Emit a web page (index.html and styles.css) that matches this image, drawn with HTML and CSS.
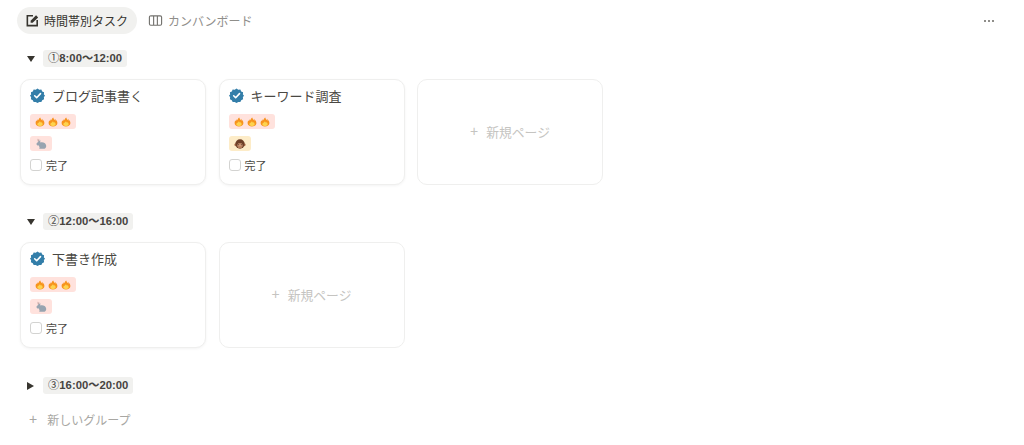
FILE: index.html
```html
<!DOCTYPE html>
<html lang="ja">
<head>
    <meta charset="UTF-8">
    <meta name="viewport" content="width=device-width, initial-scale=1.0">
    <title>時間帯別タスク</title>
    <link rel="stylesheet" href="styles.css">
</head>
<body>
    <svg class="defs" width="0" height="0">
        <symbol id="verified" viewBox="0 0 16 16">
            <path fill="#337ea9" d="M8 .6l1.9 1.2 2.2-.2.9 2 2 1-.2 2.2L16 8l-1.200 1.900.2 2.200-2 1-.9 1.900-2.200-.1L8 16l-1.900-1.100-2.200.1-.9-1.900-2-1 .2-2.200L0 8l1.200-1.200L1 4.600l2-1 .9-2 2.200.2z"/>
            <path fill="none" stroke="#fff" stroke-width="1.700" stroke-linecap="round" stroke-linejoin="round" d="M5 8.300l2.100 2.100L11.200 6"/>
        </symbol>
        <symbol id="flame" viewBox="0 0 12 12">
            <path fill="#f7941d" d="M6.300.5c.3 1.300 1.100 2 1.500 3 .5-.3.7-.8.7-1.500.5.800.8 1.600.9 2.400.3-.2.5-.5.600-.9.800 1.200 1.300 2.300 1.300 3.700 0 2.600-2.400 4.300-5.300 4.300S.7 9.800.7 7.200c0-1.200.4-2.200 1.100-3.200.1.500.3.900.6 1.200.1-.9.5-1.700 1.100-2.400.1.500.3.900.6 1.200C4.300 2.700 5.100 1.400 6.300.5z"/>
            <path fill="#fdd34e" d="M6 5c.3 1 1 1.400 1.500 1.800.2-.2.300-.4.400-.7.800.9 1.300 1.700 1.300 2.600 0 1.300-1.500 2.100-3.200 2.100s-3.200-.8-3.200-2.100c0-.8.4-1.500 1-2.200.1.300.2.500.4.700C4.900 6.300 5.300 5.600 6 5z"/>
        </symbol>
        <symbol id="rabbit" viewBox="0 0 14 14">
            <path fill="#c9a9a6" d="M3.200.8c1 .2 1.600 1.500 1.700 3.200l-1.400.3C3 3 2.700 1.600 3.200.8z"/>
            <path fill="#98a4b0" d="M5.400 1.800c.8.400 1 1.500.7 2.800l.2.700c2.800-.9 6.200.4 6.700 3.400.2 1.200-.1 2.300-.8 3-.3.500-.7.800-1.200.8H5.600c-.5 0-.8-.300-.8-.7 0-.400.3-.700.8-.7-.7-.6-1-1.500-1-2.400-1.500.2-2.800-.4-2.800-1.800 0-1 .7-1.700 1.600-2 .5-.8 1.300-1.600 2-1.100z"/>
        </symbol>
        <symbol id="monkey" viewBox="0 0 14 14">
            <circle cx="1.900" cy="8" r="1.500" fill="#b97a52"/>
            <circle cx="12.100" cy="8" r="1.500" fill="#b97a52"/>
            <circle cx="7" cy="7" r="5.500" fill="#6d3f27"/>
            <path fill="#d9a07a" d="M7 6.600c.5-.7 2.200-.7 2.600.5.200.7.100 1 .4 1.500.4 1.700-1.200 3.400-3 3.400s-3.400-1.700-3-3.400c.3-.5.200-.8.400-1.500.4-1.200 2.100-1.200 2.600-.5z"/>
            <circle cx="5.500" cy="7.900" r=".7" fill="#2f1d16"/>
            <circle cx="8.500" cy="7.900" r=".7" fill="#2f1d16"/>
            <path fill="none" stroke="#7c3f2b" stroke-width=".8" stroke-linecap="round" d="M5.600 10.300c.9.500 1.900.5 2.800 0"/>
        </symbol>
    </svg>

    <nav class="tabs">
        <div class="tab active">
            <svg class="tab-icon" viewBox="0 0 16 16"><path fill="none" stroke="#37352f" stroke-width="1.700" d="M8.500 3H2.500v10.500H13V7.500"/><path fill="#37352f" d="M6 10.500V8.300L11.800 2.500l2.200 2.200L8.200 10.500z"/></svg>
            <span>時間帯別タスク</span>
        </div>
        <div class="tab">
            <svg class="tab-icon" viewBox="0 0 16 16"><path fill="none" stroke="#73726e" stroke-width="1.200" d="M3 3h10a1.500 1.500 0 0 1 1.500 1.500v7A1.500 1.500 0 0 1 13 13H3a1.500 1.500 0 0 1-1.500-1.500v-7A1.500 1.500 0 0 1 3 3zM6 3v10M10 3v10"/></svg>
            <span>カンバンボード</span>
        </div>
        <div class="more"><i></i><i></i><i></i></div>
    </nav>

    <section class="group">
        <div class="group-head">
            <span class="arrow down"></span>
            <span class="group-label">①8:00～12:00</span>
        </div>
        <div class="cards">
            <article class="card">
                <div class="card-title"><svg class="verified"><use href="#verified"/></svg>ブログ記事書く</div>
                <div class="tag red"><svg class="emoji"><use href="#flame"/></svg><svg class="emoji"><use href="#flame"/></svg><svg class="emoji"><use href="#flame"/></svg></div>
                <div class="tag red"><svg class="emoji single"><use href="#rabbit"/></svg></div>
                <label class="done"><span class="checkbox"></span>完了</label>
            </article>
            <article class="card">
                <div class="card-title"><svg class="verified"><use href="#verified"/></svg>キーワード調査</div>
                <div class="tag red"><svg class="emoji"><use href="#flame"/></svg><svg class="emoji"><use href="#flame"/></svg><svg class="emoji"><use href="#flame"/></svg></div>
                <div class="tag yellow"><svg class="emoji single"><use href="#monkey"/></svg></div>
                <label class="done"><span class="checkbox"></span>完了</label>
            </article>
            <div class="card new-page"><span class="plus">+</span>新規ページ</div>
        </div>
    </section>

    <section class="group">
        <div class="group-head">
            <span class="arrow down"></span>
            <span class="group-label">②12:00～16:00</span>
        </div>
        <div class="cards">
            <article class="card">
                <div class="card-title"><svg class="verified"><use href="#verified"/></svg>下書き作成</div>
                <div class="tag red"><svg class="emoji"><use href="#flame"/></svg><svg class="emoji"><use href="#flame"/></svg><svg class="emoji"><use href="#flame"/></svg></div>
                <div class="tag red"><svg class="emoji single"><use href="#rabbit"/></svg></div>
                <label class="done"><span class="checkbox"></span>完了</label>
            </article>
            <div class="card new-page"><span class="plus">+</span>新規ページ</div>
        </div>
    </section>

    <section class="group closed">
        <div class="group-head">
            <span class="arrow right"></span>
            <span class="group-label">③16:00～20:00</span>
        </div>
    </section>

    <div class="new-group"><span class="plus">+</span>新しいグループ</div>
</body>
</html>
```

FILE: styles.css
```css
body {
    margin: 0;
    height: 445px;
    overflow: hidden;
    background-color: #fff;
    color: #37352f;
    font-family: "Liberation Sans", "Noto Sans CJK JP", sans-serif;
}
.defs {
    position: absolute;
}
.tabs {
    display: flex;
    align-items: center;
    height: 27px;
    margin: 7px 17px 0;
    gap: 3px;
}
.tab {
    display: flex;
    align-items: center;
    gap: 6px;
    height: 27px;
    padding: 0 9px 0 8px;
    border-radius: 14px;
    font-size: 12px;
    color: #8f8e8a;
}
.tab.active {
    gap: 5px;
    background-color: #f1f1ef;
    color: #37352f;
}
.tab-icon {
    width: 15px;
    height: 15px;
    margin-right: -1px;
}
.more {
    display: flex;
    gap: 2px;
    margin-left: auto;
    margin-right: 13px;
}
.more i {
    width: 2px;
    height: 2px;
    background-color: #8f8e8a;
}
.group {
    margin: 15px 0 0 20px;
}
.group + .group {
    margin-top: 27px;
}
.group.closed {
    margin-top: 28px;
}
.group-head {
    display: flex;
    align-items: center;
    height: 19px;
    margin-bottom: 11px;
}
.group.closed .group-head {
    margin-bottom: 0;
}
.arrow {
    width: 0;
    height: 0;
    margin-left: 7px;
    margin-right: 9px;
}
.arrow.down {
    border-left: 4px solid transparent;
    border-right: 4px solid transparent;
    border-top: 6px solid #37352f;
    margin-right: 8px;
}
.arrow.right {
    border-top: 4px solid transparent;
    border-bottom: 4px solid transparent;
    border-left: 7px solid #37352f;
}
.group-label {
    padding: 0 5px;
    background-color: #f1f1ef;
    border-radius: 3px;
    font-size: 11.3px;
    line-height: 17px;
    font-weight: 700;
    color: #46443f;
}
.group-label::first-letter {
    font-weight: 400;
}
.cards {
    display: flex;
    gap: 12.5px;
}
.card {
    box-sizing: border-box;
    width: 186px;
    height: 106px;
    padding: 5px 9px;
    border: 1px solid #efefee;
    border-radius: 10px;
    background-color: #fff;
    box-shadow: 0 1px 3px rgba(15, 15, 15, 0.05);
}
.card-title {
    display: flex;
    align-items: center;
    gap: 7px;
    height: 20px;
    margin-bottom: 9px;
    font-size: 13px;
    color: #4a4843;
}
.verified {
    width: 15px;
    height: 15px;
}
.tag {
    display: flex;
    align-items: center;
    gap: 3px;
    width: fit-content;
    height: 15px;
    padding: 0 5px;
    margin-bottom: 7px;
    border-radius: 3px;
}
.tag.red {
    background-color: #ffe2dd;
}
.tag.yellow {
    background-color: #fdecc8;
}
.emoji {
    width: 10px;
    height: 12px;
}
.emoji.single {
    width: 12px;
}
.done {
    display: flex;
    align-items: center;
    gap: 4px;
    height: 15px;
    margin-top: -1px;
    font-size: 11px;
    color: #4a4843;
}
.checkbox {
    box-sizing: border-box;
    width: 12px;
    height: 12px;
    border: 1.5px solid #d3d3d1;
    border-radius: 3px;
}
.new-page {
    display: flex;
    align-items: center;
    justify-content: center;
    padding-bottom: 7px;
    font-size: 12.8px;
    color: #c5c4c1;
    box-shadow: none;
}
.plus {
    margin-right: 8px;
    font-size: 14px;
}
.new-group {
    display: flex;
    align-items: center;
    height: 20px;
    margin: 14px 0 0 29px;
    font-size: 12px;
    color: #a8a7a3;
}
.new-group .plus {
    margin-right: 10px;
}
```
